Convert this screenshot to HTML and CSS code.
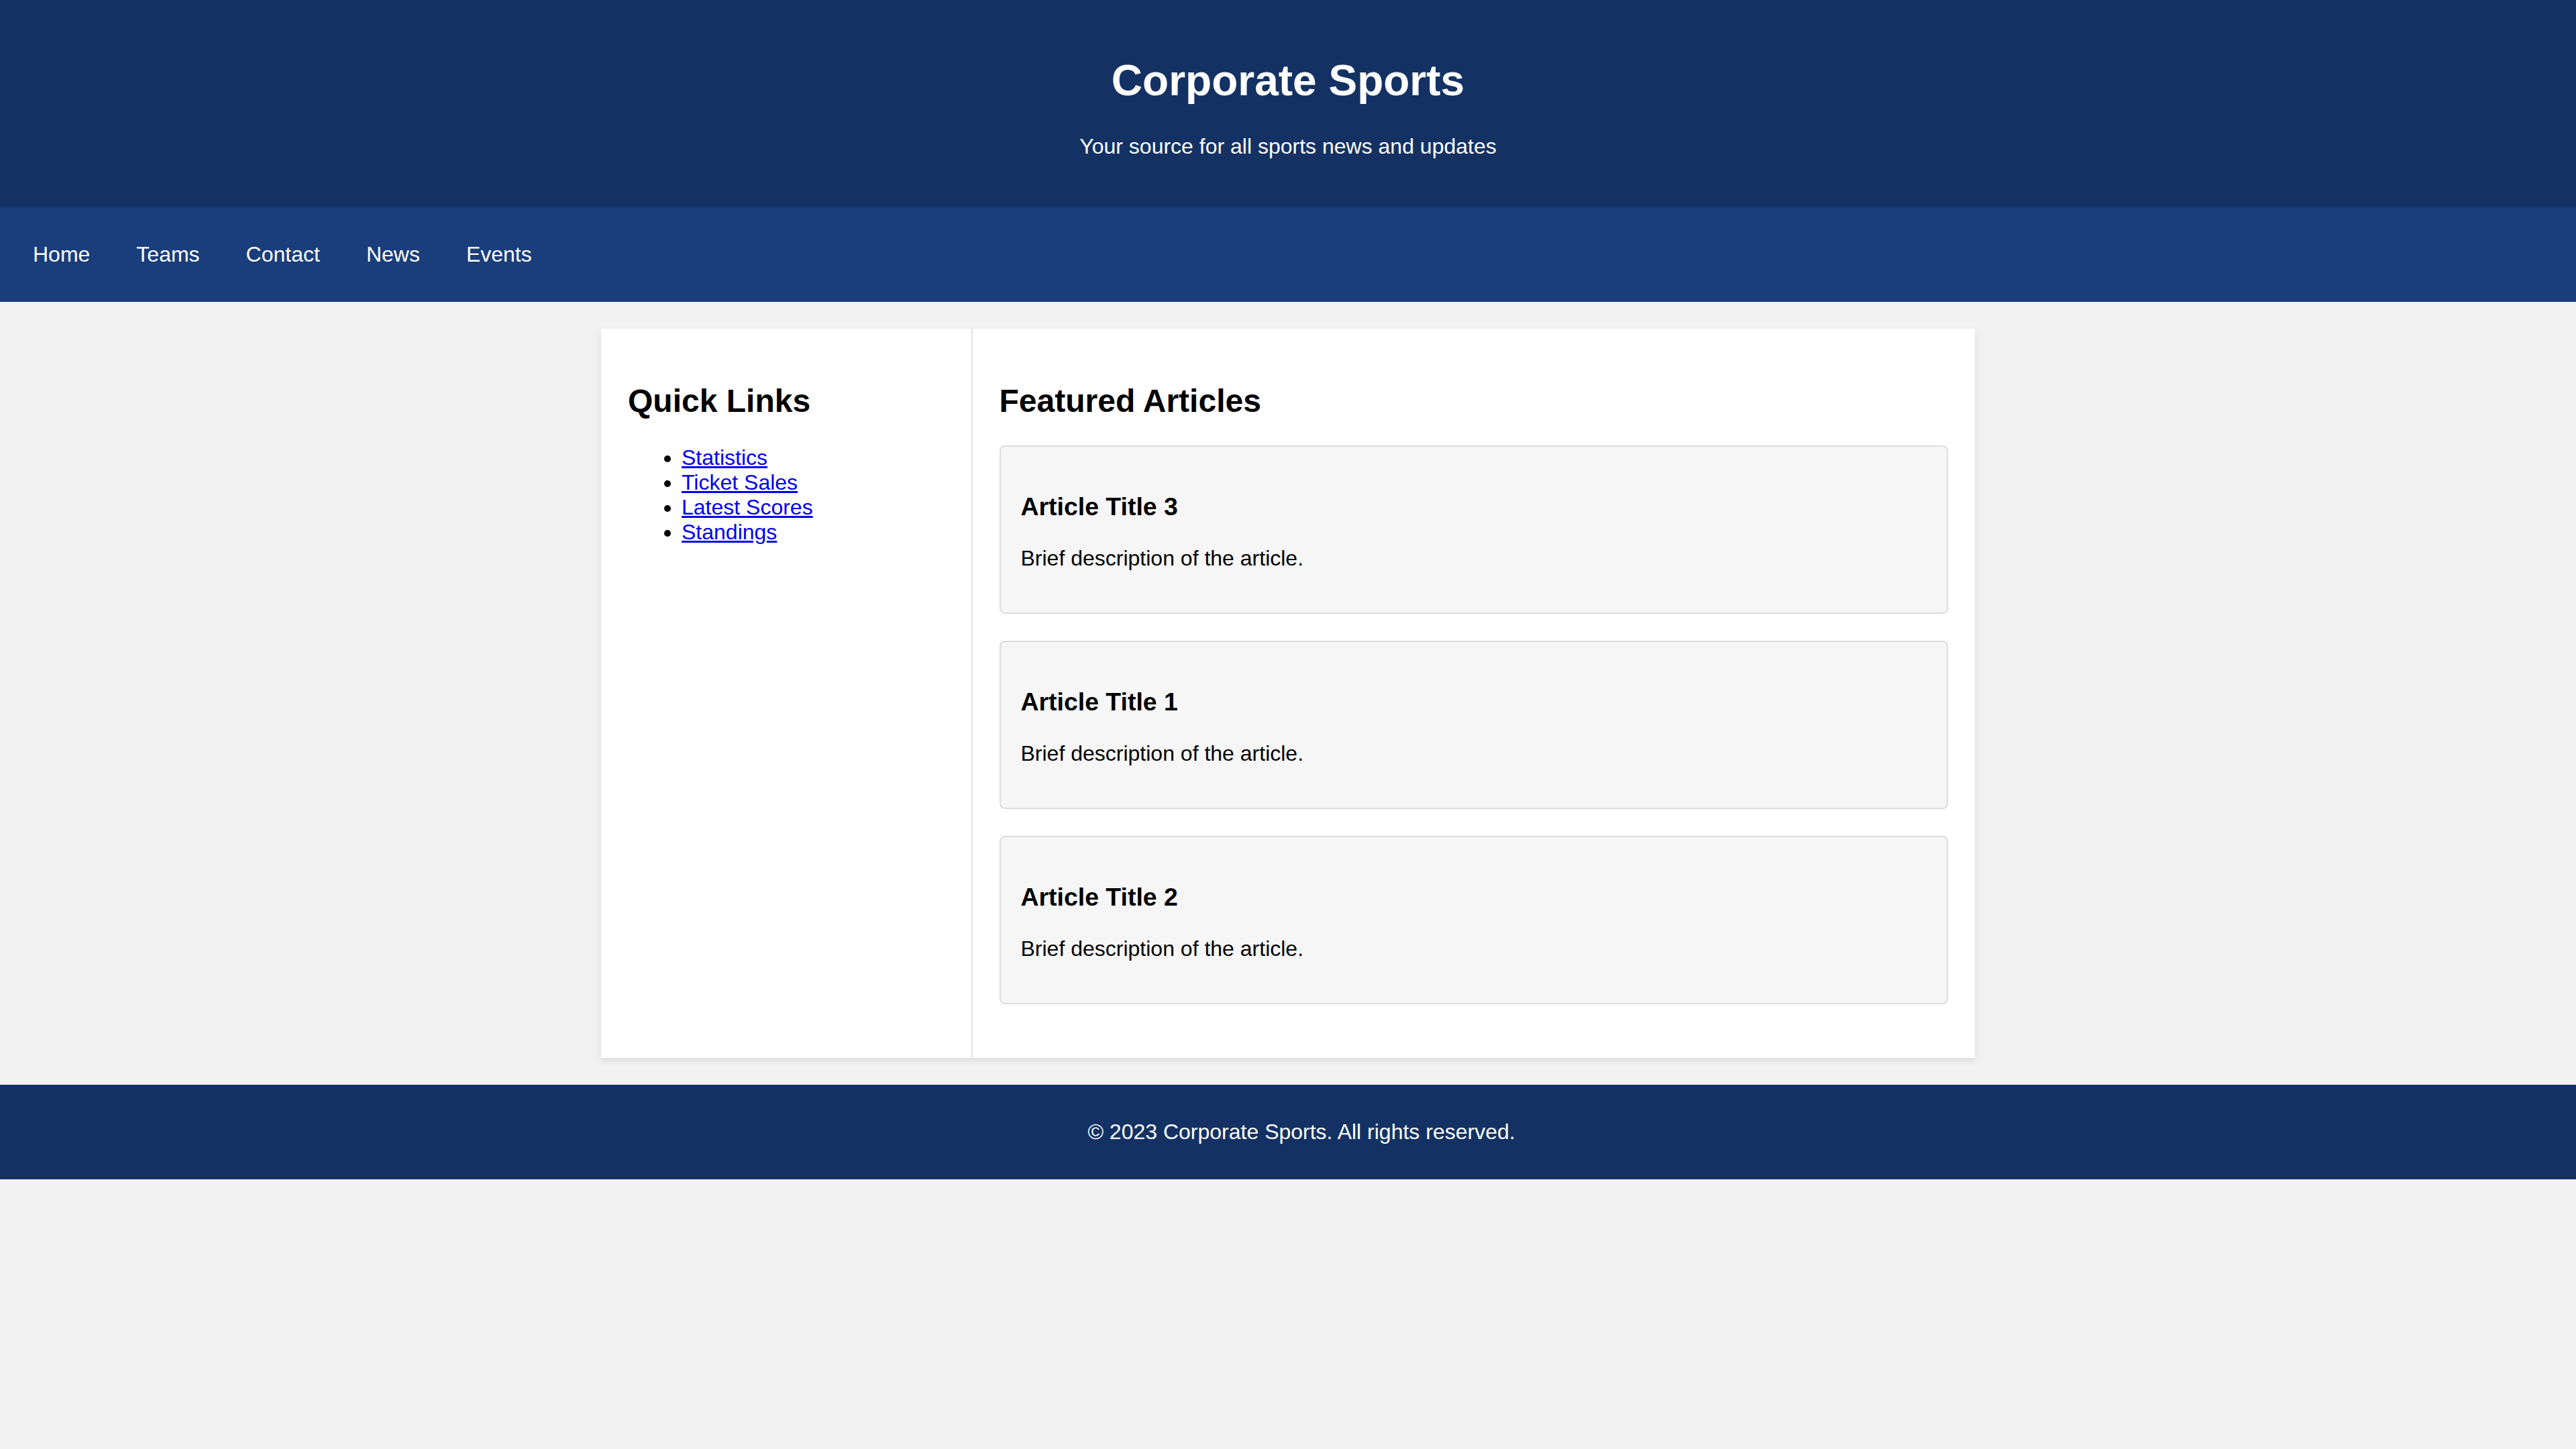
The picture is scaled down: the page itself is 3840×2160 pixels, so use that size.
FILE: index.html
```html
<!DOCTYPE html>
<html lang="en">
<head>
<meta charset="utf-8">
<title>Corporate Sports</title>
<link rel="stylesheet" href="styles.css">
</head>
<body>
<header class="site-header">
  <h1>Corporate Sports</h1>
  <p>Your source for all sports news and updates</p>
</header>
<nav class="site-nav">
  <ul>
    <li><a href="#">Home</a></li>
    <li><a href="#">Teams</a></li>
    <li><a href="#">Contact</a></li>
    <li><a href="#">News</a></li>
    <li><a href="#">Events</a></li>
  </ul>
</nav>
<div class="container">
  <aside class="sidebar">
    <h2>Quick Links</h2>
    <ul>
      <li><a href="#">Statistics</a></li>
      <li><a href="#">Ticket Sales</a></li>
      <li><a href="#">Latest Scores</a></li>
      <li><a href="#">Standings</a></li>
    </ul>
  </aside>
  <main class="content">
    <h2>Featured Articles</h2>
    <article class="card">
      <h3>Article Title 3</h3>
      <p>Brief description of the article.</p>
    </article>
    <article class="card">
      <h3>Article Title 1</h3>
      <p>Brief description of the article.</p>
    </article>
    <article class="card">
      <h3>Article Title 2</h3>
      <p>Brief description of the article.</p>
    </article>
  </main>
</div>
<footer class="site-footer">
  <p>&copy; 2023 Corporate Sports. All rights reserved.</p>
</footer>
</body>
</html>
```
FILE: styles.css
```css
html, body {
  margin: 0;
  padding: 0;
}
body {
  font-family: "Liberation Sans", Arial, Helvetica, sans-serif;
  font-size: 32px;
  background: #f2f2f2;
  color: #000;
}
.site-header {
  background: #133263;
  color: #fff;
  text-align: center;
  padding: 40px 0;
}
.site-header h1 {
  font-size: 64px;
  margin: 42.88px 0;
}
.site-header p {
  margin: 32px 0;
}
.site-nav {
  background: #1a3d7b;
  padding: 32px 0;
}
.site-nav ul {
  list-style: none;
  margin: 0;
  padding: 0 19px;
  display: flex;
  gap: 9px;
}
.site-nav a {
  display: block;
  padding: 20px 30px;
  color: #fff;
  text-decoration: none;
}
.container {
  max-width: 2048px;
  margin: 40px auto;
  background: #fff;
  display: flex;
  box-shadow: 0 4px 10px rgba(0, 0, 0, 0.1);
}
.sidebar {
  flex: 1;
  padding: 40px;
}
.content {
  flex: 3;
  padding: 40px;
  border-left: 2px solid #e0e0e0;
}
h2 {
  font-size: 48px;
  margin: 39.84px 0;
}
.sidebar ul {
  margin: 32px 0;
  padding-left: 80px;
}
.sidebar a {
  color: #0000ee;
}
.card {
  background: #f6f6f6;
  border: 2px solid #dcdcdc;
  border-radius: 8px;
  padding: 30px;
  margin-bottom: 40px;
}
.card h3 {
  font-size: 37.44px;
  margin: 37.44px 0;
}
.card p {
  margin: 32px 0;
}
.site-footer {
  background: #133263;
  color: #fff;
  text-align: center;
  padding: 20px 0 20px 40px;
}
.site-footer p {
  margin: 32px 0;
}
```
